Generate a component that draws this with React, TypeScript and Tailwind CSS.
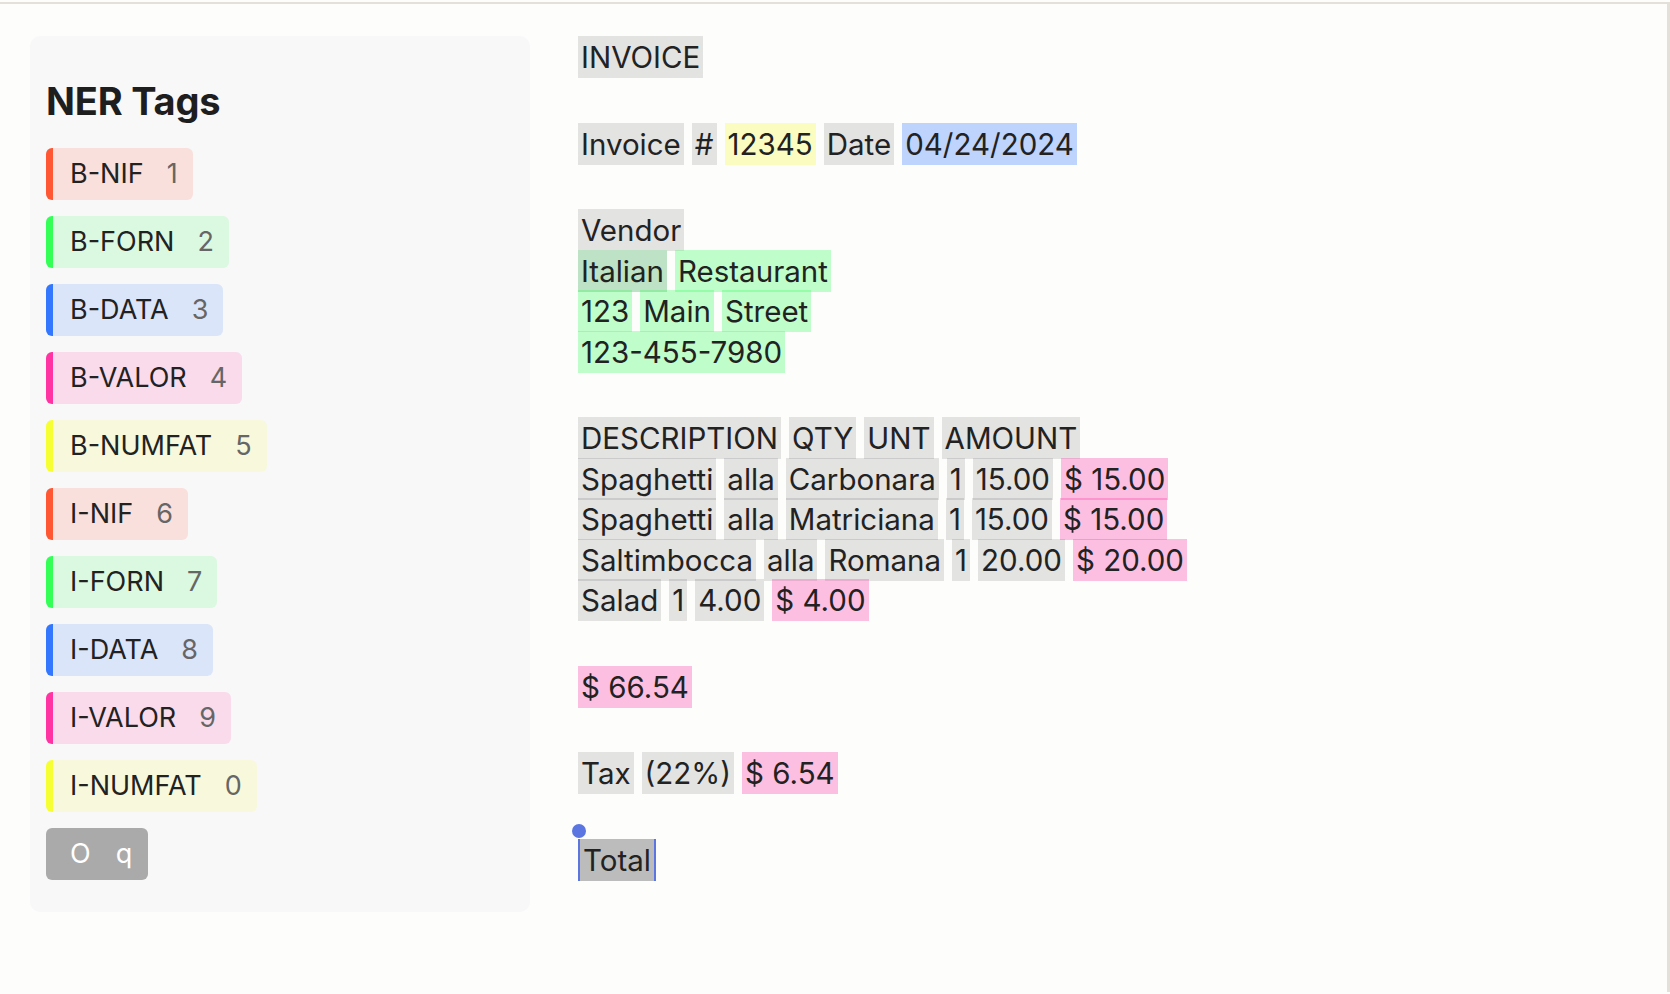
import React from "react";

type Kind = "g" | "gr" | "sel" | "p" | "y" | "b" | "t";

const tokenClass: Record<Kind, string> = {
  g: "bg-[rgba(0,0,0,0.1)]",
  gr: "bg-[rgba(51,255,87,0.3)]",
  sel: "bg-[#bde2c5]",
  p: "bg-[rgba(255,51,161,0.3)]",
  y: "bg-[rgba(245,255,51,0.3)]",
  b: "bg-[rgba(51,119,255,0.3)]",
  t: "bg-[#bcbcbc] border-x-2 border-[#5b76e0]",
};

const tags = [
  { label: "B-NIF", key: "1", cls: "border-[#ff5733] bg-[rgba(255,87,51,0.15)]" },
  { label: "B-FORN", key: "2", cls: "border-[#33ff57] bg-[rgba(51,255,87,0.15)]" },
  { label: "B-DATA", key: "3", cls: "border-[#3377ff] bg-[rgba(51,119,255,0.15)]" },
  { label: "B-VALOR", key: "4", cls: "border-[#ff33a1] bg-[rgba(255,51,161,0.15)]" },
  { label: "B-NUMFAT", key: "5", cls: "border-[#f5ff33] bg-[rgba(245,255,51,0.15)]" },
  { label: "I-NIF", key: "6", cls: "border-[#ff5733] bg-[rgba(255,87,51,0.15)]" },
  { label: "I-FORN", key: "7", cls: "border-[#33ff57] bg-[rgba(51,255,87,0.15)]" },
  { label: "I-DATA", key: "8", cls: "border-[#3377ff] bg-[rgba(51,119,255,0.15)]" },
  { label: "I-VALOR", key: "9", cls: "border-[#ff33a1] bg-[rgba(255,51,161,0.15)]" },
  { label: "I-NUMFAT", key: "0", cls: "border-[#f5ff33] bg-[rgba(245,255,51,0.15)]" },
];

const rows: ([string, Kind][] | null)[] = [
  [["INVOICE", "g"]],
  null,
  [
    ["Invoice", "g"],
    ["#", "g"],
    ["12345", "y"],
    ["Date", "g"],
    ["04/24/2024", "b"],
  ],
  null,
  [["Vendor", "g"]],
  [
    ["Italian", "sel"],
    ["Restaurant", "gr"],
  ],
  [
    ["123", "gr"],
    ["Main", "gr"],
    ["Street", "gr"],
  ],
  [["123-455-7980", "gr"]],
  null,
  [
    ["DESCRIPTION", "g"],
    ["QTY", "g"],
    ["UNT", "g"],
    ["AMOUNT", "g"],
  ],
  [
    ["Spaghetti", "g"],
    ["alla", "g"],
    ["Carbonara", "g"],
    ["1", "g"],
    ["15.00", "g"],
    ["$ 15.00", "p"],
  ],
  [
    ["Spaghetti", "g"],
    ["alla", "g"],
    ["Matriciana", "g"],
    ["1", "g"],
    ["15.00", "g"],
    ["$ 15.00", "p"],
  ],
  [
    ["Saltimbocca", "g"],
    ["alla", "g"],
    ["Romana", "g"],
    ["1", "g"],
    ["20.00", "g"],
    ["$ 20.00", "p"],
  ],
  [
    ["Salad", "g"],
    ["1", "g"],
    ["4.00", "g"],
    ["$ 4.00", "p"],
  ],
  null,
  [["$ 66.54", "p"]],
  null,
  [
    ["Tax", "g"],
    ["(22%)", "g"],
    ["$ 6.54", "p"],
  ],
  null,
  [["Total", "t"]],
];

function Token({ text, kind }: { text: string; kind: Kind }) {
  return (
    <span
      className={`relative h-[42px] shrink-0 whitespace-pre px-[3px] leading-[42px] ${tokenClass[kind]}`}
    >
      {kind === "t" && (
        <span className="absolute -left-[8px] -top-[15px] size-[14px] rounded-full bg-[#5b76e0]" />
      )}
      {text}
    </span>
  );
}

export default function App() {
  return (
    <div className="min-h-screen bg-[#fdfdfc] pt-[2px] font-['Inter',sans-serif] text-[#222]">
      <div className="flex min-h-[990px] items-start border-r-[3px] border-t-2 border-[#e2e0d8] pt-[32px]">
        <aside className="ml-[30px] w-[500px] shrink-0 rounded-[10px] bg-[#f8f8f9] px-[16px] pb-[32px] pt-[45px]">
          <h1 className="h-[40px] text-[38px] leading-[40px] font-bold tracking-[-0.2px] text-[#1e1e1e]">
            NER Tags
          </h1>
          <div className="mt-[27px] flex flex-col items-start gap-[16px]">
            {tags.map((t) => (
              <div
                key={t.label}
                className={`flex h-[52px] items-center rounded-[6px] border-l-[7px] pl-[17px] pr-[15px] text-[27px] ${t.cls}`}
              >
                <span className="text-[#222]">{t.label}</span>
                <span className="ml-[23px] text-[#666]">{t.key}</span>
              </div>
            ))}
            <div className="flex h-[52px] items-center rounded-[6px] bg-[#aaaaaa] pl-[24px] pr-[16px] text-[27px] text-white">
              <span>O</span>
              <span className="ml-[25px]">q</span>
            </div>
          </div>
        </aside>
        <main className="ml-[48px] flex flex-col text-[29.5px] text-[#222]">
          {rows.map((row, i) =>
            row ? (
              <div key={i} className="flex h-[40.5px] items-start gap-[8px]">
                {row.map(([text, kind], j) => (
                  <Token key={j} text={text} kind={kind} />
                ))}
              </div>
            ) : (
              <div key={i} className="h-[46px]" />
            )
          )}
        </main>
      </div>
    </div>
  );
}
